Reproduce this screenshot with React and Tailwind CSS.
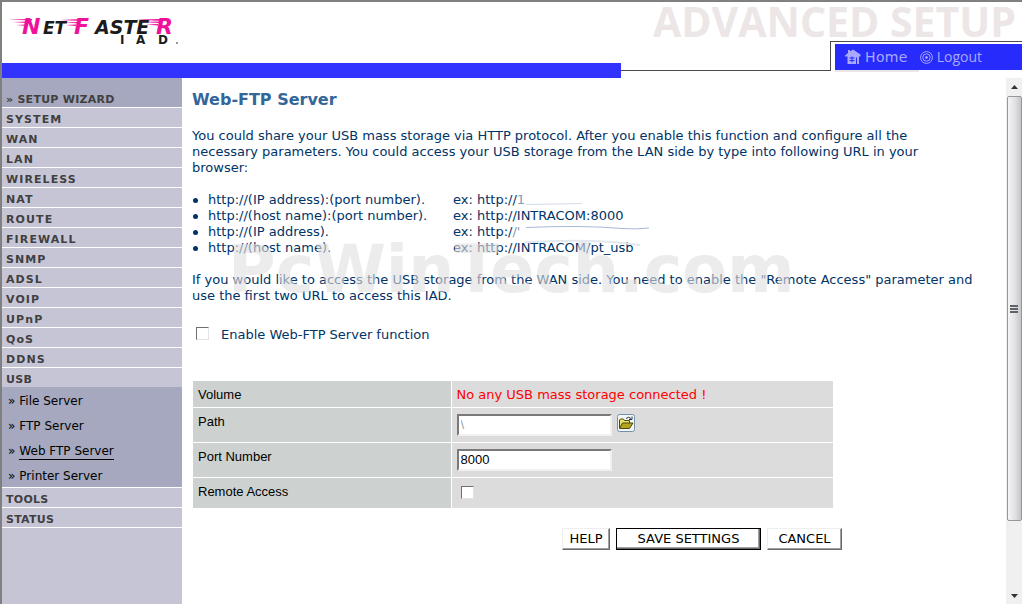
import React from 'react';

const mainMenu = ['SYSTEM', 'WAN', 'LAN', 'WIRELESS', 'NAT', 'ROUTE', 'FIREWALL', 'SNMP', 'ADSL', 'VOIP', 'UPnP', 'QoS', 'DDNS'];
const usbMenu = ['File Server', 'FTP Server', 'Web FTP Server', 'Printer Server'];

const examples = [
  { pattern: 'http://(IP address):(port number).', example: 'ex: http://', faded: '1' },
  { pattern: 'http://(host name):(port number).', example: 'ex: http://INTRACOM:8000' },
  { pattern: 'http://(IP address).', example: 'ex: http:/', faded: '/\'' },
  { pattern: 'http://(host name).', example: 'ex: http://INTRACOM/pt_usb' },
];

const checkboxStyle = "block appearance-none size-[13px] bg-white border border-t-[#707070] border-l-[#707070] border-r-[#e3e3e3] border-b-[#e3e3e3] checked:bg-[#336699]";
const inputStyle = "block w-[155px] h-[22px] pl-0.5 bg-white border-2 border-t-[#7a7a7a] border-l-[#7a7a7a] border-r-[#f0f0f0] border-b-[#f0f0f0] font-['Liberation_Sans',sans-serif] text-[13px]";
const buttonStyle = "h-[22px] bg-white border border-t-[#eeeeee] border-l-[#eeeeee] border-r-[#696969] border-b-[#696969] shadow-[inset_-1px_-1px_0_#a0a0a0] text-[13px] leading-4 text-black";

function Logo() {
  return (
    <svg className="block w-[176px] h-8 overflow-visible" viewBox="0 0 176 32" role="img" aria-label="NetFasteR IAD">
      <g fill="#f0119b">
        <path d="M0 3.500 24 3v1.600zM5 6 22 5.400v1.800zM8 9l12-.600v1.600z" />
        <path d="M52 4 74 3v2zM56 6.600l16-.700v1.500zM58 9l10-.500v1.400z" />
        <path d="M128 3.500 154 3v2zM132 6l20-.600v1.700zM138 8.600l12-.500v1.500z" />
      </g>
      <g fontFamily="'DejaVu Sans', sans-serif" fontWeight="bold" fontStyle="italic">
        <text x="14" y="18" fontSize="22" fill="#f0119b">N</text>
        <text x="35" y="18" fontSize="17" fill="#1c1c1c">ET</text>
        <text x="66" y="18" fontSize="22" fill="#f0119b">F</text>
        <text x="87" y="18" fontSize="19" fill="#1c1c1c">ASTE</text>
        <text x="148" y="18" fontSize="22" fill="#f0119b">R</text>
      </g>
      <text x="112 128 150" y="28" fontFamily="'DejaVu Sans', sans-serif" fontSize="12" fontWeight="bold" fill="#1c1c1c">IAD</text>
      <circle cx="169" cy="27" r="1" fill="#777" />
    </svg>
  );
}

function HomeIcon() {
  return (
    <svg className="w-4 h-4" viewBox="0 0 16 16" fill="#a9a9ff" aria-hidden="true">
      <path d="M0 6.500 3 4V1h2v1.500L8 .5l7.500 5v2H14V15H2.500V7.500H0z" />
      <path d="M4.500 9h5M4.500 11.500h5M7 7.500v6M11.500 8.500v6.500" stroke="#272bfb" />
    </svg>
  );
}

function LogoutIcon() {
  return (
    <svg className="w-[13px] h-[13px]" viewBox="0 0 13 13" fill="none" stroke="#a9a9ff" aria-hidden="true">
      <circle cx="6.500" cy="6.500" r="5.900" />
      <circle cx="6.500" cy="6.500" r="3.700" />
      <circle cx="6.500" cy="6.500" r="1" fill="#a9a9ff" />
    </svg>
  );
}

function FolderIcon() {
  return (
    <svg className="block w-[18px] h-[18px]" viewBox="0 0 18 18" aria-hidden="true">
      <rect x=".5" y=".5" width="17" height="17" rx="2" fill="#f3f6f8" stroke="#7390aa" />
      <path d="M2.500 14V6l1-1h3l1 1.500h5V9" fill="#e8df6a" stroke="#4c4a0a" />
      <path d="M2.500 14.500 5.500 9h10.500l-3.500 5.500z" fill="#b0a51c" stroke="#4c4a0a" />
      <path d="M9 4.500q2.500-2.500 5 0M15 2.500v3h-3" fill="none" stroke="#26323c" />
    </svg>
  );
}

function Header() {
  return (
    <header className="flex">
      <div className="flex-1 flex flex-col justify-between">
        <div className="pl-1.5 pt-3.5">
          <Logo />
        </div>
        <div className="h-[15px] bg-[#3333ff]"></div>
      </div>
      <div className="w-[401px] shrink-0">
        <div className="h-[39px] pr-1.5 text-right whitespace-nowrap font-['Open_Sans',sans-serif] font-bold text-[41px] leading-[39px] text-[#ece6e6]">
          ADVANCED SETUP
        </div>
        <div className="flex">
          <div className="w-[209px] h-[30px] border-b border-[#4a4a4a]"></div>
          <div className="flex-1 h-[30px] border-t border-l border-[#4a4a4a] pl-1 pt-0.5">
            <nav className="flex items-center h-[26px] pl-2.5 bg-[#272bfb] text-[#a9a9ff]">
              <a href="#home" className="flex items-center gap-1 text-sm tracking-wide">
                <HomeIcon />
                Home
              </a>
              <a href="#logout" className="flex items-center gap-1 ml-3 font-['Open_Sans',sans-serif] text-sm">
                <LogoutIcon />
                Logout
              </a>
            </nav>
            <div className="w-[84px] h-0.5 bg-[#ece6e6]"></div>
          </div>
        </div>
        <div className="h-[7px]"></div>
      </div>
    </header>
  );
}

function MenuItem({ label, tracking = 'tracking-widest' }) {
  return (
    <a href={`#${label}`} className={`block h-5 pl-1 pt-1 border-b border-white text-[11px] leading-4 font-bold ${tracking} text-[#404040]`}>
      {label}
    </a>
  );
}

function Sidebar() {
  return (
    <nav className="w-[180px] shrink-0 bg-[#c6c5d6]">
      <a href="#wizard" className="flex gap-1 h-[30px] pl-1 pt-3.5 border-b border-white bg-[#a5a8be] text-[11px] leading-4 font-bold tracking-wide text-[#404040]">
        <span>»</span>
        SETUP WIZARD
      </a>
      {mainMenu.map((item) => (
        <MenuItem key={item} label={item} />
      ))}
      <a href="#USB" className="block h-[19px] pl-1 pt-1 text-[11px] leading-4 font-bold tracking-wide text-[#404040]">USB</a>
      {/* USB submenu */}
      <div className="bg-[#a5a8be] border-b border-white">
        {usbMenu.map((item) => (
          <div key={item} className="flex gap-1 h-[25px] pl-1.5 pt-1.5 text-xs leading-4 text-black">
            <span>»</span>
            <a href={`#${item}`} className={item === 'Web FTP Server' ? 'self-start border-b border-black leading-4' : ''}>{item}</a>
          </div>
        ))}
      </div>
      <MenuItem label="TOOLS" tracking="tracking-wide" />
      <MenuItem label="STATUS" tracking="tracking-wide" />
    </nav>
  );
}

function Row({ label, htmlFor, height, children }) {
  return (
    <tr className={`${height} border-b border-white last:border-b-0`}>
      <th className="w-[258px] bg-[#cdd2d0] border-r border-white pl-[5px] pt-1 align-top text-left font-normal font-['Liberation_Sans',sans-serif] text-[13px] leading-5 text-black">
        <label htmlFor={htmlFor}>{label}</label>
      </th>
      <td className="bg-[#dcdcdc] pl-[5px] pt-1 align-top">{children}</td>
    </tr>
  );
}

function Scrollbar() {
  return (
    <div className="w-4 shrink-0 flex flex-col items-center bg-[#f0f0f0]" aria-hidden="true">
      <svg className="w-4 h-[18px]" viewBox="0 0 16 18">
        <path d="M5 11 8.500 7l3.500 4z" fill="#333" />
      </svg>
      <div className="w-[15px] flex-[425] flex flex-col items-center justify-center gap-px rounded-xs border border-[#979797] bg-gradient-to-r from-[#f4f4f4] via-[#e3e3e6] to-[#c4c5c8]">
        <div className="w-2 h-0.5 bg-[#5f6368]"></div>
        <div className="w-2 h-0.5 bg-[#5f6368]"></div>
        <div className="w-2 h-0.5 bg-[#5f6368]"></div>
      </div>
      <div className="flex-[65]"></div>
      <svg className="w-4 h-[18px]" viewBox="0 0 16 18">
        <path d="M5 8h7l-3.500 4z" fill="#333" />
      </svg>
    </div>
  );
}

export default function App() {
  return (
    <div className="min-h-screen flex flex-col bg-white border-t-2 border-l-2 border-[#808080] font-['DejaVu_Sans',sans-serif]">
      <Header />
      <div className="flex-1 flex">
        <Sidebar />
        <main className="flex-1 min-w-0 pl-2.5 pt-3 text-[13px] leading-4 text-[#003366]">
          <h1 className="text-base leading-5 font-bold text-[#336699]">Web-FTP Server</h1>

          <div className="relative mt-[18px]">
            <p className="max-w-[760px]">
              You could share your USB mass storage via HTTP protocol. After you enable this function and configure all the
              necessary parameters. You could access your USB storage from the LAN side by type into following URL in your
              browser:
            </p>
            <ul className="my-4">
              {examples.map((item) => (
                <li key={item.pattern} className="flex items-center">
                  <span className="size-[5px] ml-px mr-2.5 rounded-full bg-[#003366]"></span>
                  <span className="w-[245px]">{item.pattern}</span>
                  <span>{item.example}<span className="opacity-50">{item.faded}</span></span>
                </li>
              ))}
            </ul>
            <p className="max-w-[800px]">
              If you would like to access the USB storage from the WAN side. You need to enable the "Remote Access" parameter and
              use the first two URL to access this IAD.
            </p>
            {/* Smudges over the example addresses */}
            <svg className="absolute left-[330px] top-[70px] w-[130px] h-[50px]" viewBox="0 0 130 50" fill="none" aria-hidden="true">
              <path d="M4 6.500 60 5.500" stroke="#d5dce8" />
              <path d="M4 29.500Q60 27 100 30.500q14 1 27-.5" stroke="#a9b8d8" />
              <path d="M2 44.500Q70 40 118 47" stroke="#e3e8f0" strokeWidth="2" />
            </svg>
            {/* Watermark */}
            <div className="absolute left-9 top-[106px] pointer-events-none whitespace-nowrap font-bold text-[65px] leading-[72px] text-[#dfdfdf]/60" aria-hidden="true">
              PcWinTech.com
            </div>
          </div>

          <div className="flex items-start gap-3 mt-[23px] pl-1">
            <input id="enable" type="checkbox" className={checkboxStyle} />
            <label htmlFor="enable">Enable Web-FTP Server function</label>
          </div>

          <table className="mt-[38px] ml-px w-[640px] max-w-full border-collapse table-fixed">
            <tbody>
              <Row label="Volume" height="h-[26px]">
                <span className="block leading-5 text-[#ff0000]">No any USB mass storage connected !</span>
              </Row>
              <Row label="Path" htmlFor="path" height="h-[35px]">
                <div className="flex items-start gap-[5px] pt-0.5">
                  <input id="path" type="text" defaultValue="\" className={`${inputStyle} text-[#a0a0a0]`} />
                  <button type="button" aria-label="Browse folders"><FolderIcon /></button>
                </div>
              </Row>
              <Row label="Port Number" htmlFor="port" height="h-[35px]">
                <div className="pt-0.5">
                  <input id="port" type="text" defaultValue="8000" className={`${inputStyle} text-black`} />
                </div>
              </Row>
              <Row label="Remote Access" htmlFor="remote" height="h-[31px]">
                <div className="pl-1 pt-1">
                  <input id="remote" type="checkbox" className={checkboxStyle} />
                </div>
              </Row>
            </tbody>
          </table>

          <div className="flex justify-end gap-1.5 w-[650px] max-w-full mt-5 mb-4">
            <button type="button" className={`${buttonStyle} w-12`}>HELP</button>
            <button type="submit" className="w-[145px] h-[22px] bg-white border border-black shadow-[inset_-1px_-1px_0_#696969,inset_-2px_-2px_0_#a0a0a0] text-[13px] leading-4 text-black">SAVE SETTINGS</button>
            <button type="button" className={`${buttonStyle} w-[75px]`}>CANCEL</button>
          </div>
        </main>
        <Scrollbar />
      </div>
    </div>
  );
}
